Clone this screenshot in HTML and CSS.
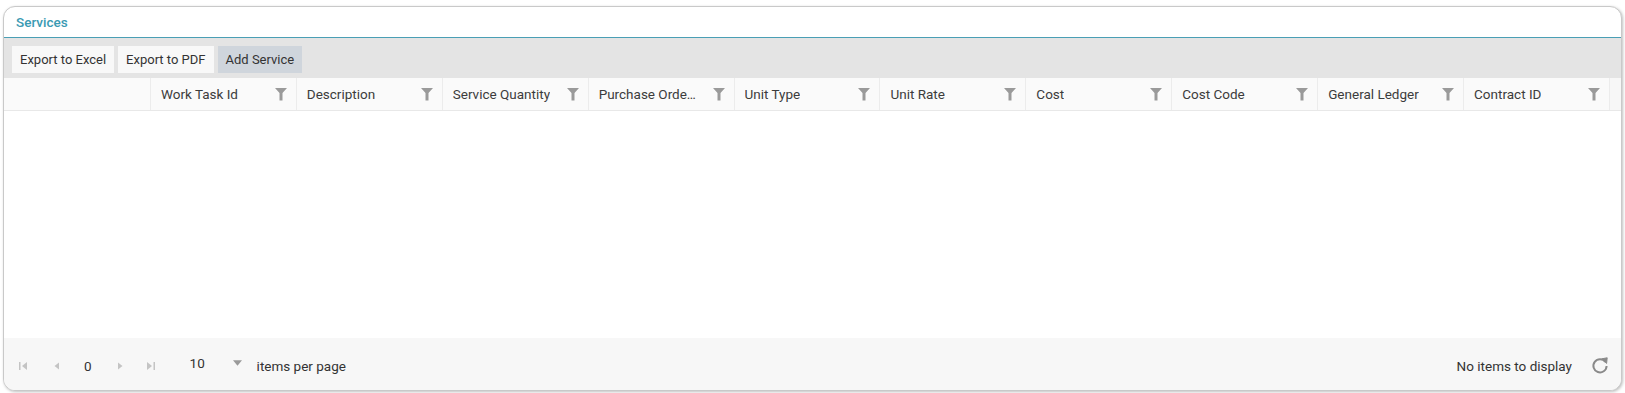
FILE: index.html
```html
<!DOCTYPE html>
<html>

<head>
    <title>Services</title>
    <meta charset="UTF-8">
    <link rel="stylesheet" href="styles.css">
</head>

<body>
    <div class="panel">
        <div class="panel-title">Services</div>

        <div class="toolbar">
            <span class="btn">Export to Excel</span>
            <span class="btn">Export to PDF</span>
            <span class="btn btn-primary">Add Service</span>
        </div>

        <div class="grid-header">
            <div class="th"></div>
            <div class="th"><span>Work Task Id</span><svg class="filter" viewBox="0 0 12 14"><polygon points="0,1 12,1 7.5,6 7.5,13.5 4.5,13.5 4.5,6" /></svg></div>
            <div class="th"><span>Description</span><svg class="filter" viewBox="0 0 12 14"><polygon points="0,1 12,1 7.5,6 7.5,13.5 4.5,13.5 4.5,6" /></svg></div>
            <div class="th"><span>Service Quantity</span><svg class="filter" viewBox="0 0 12 14"><polygon points="0,1 12,1 7.5,6 7.5,13.5 4.5,13.5 4.5,6" /></svg></div>
            <div class="th"><span>Purchase Orde…</span><svg class="filter" viewBox="0 0 12 14"><polygon points="0,1 12,1 7.5,6 7.5,13.5 4.5,13.5 4.5,6" /></svg></div>
            <div class="th"><span>Unit Type</span><svg class="filter" viewBox="0 0 12 14"><polygon points="0,1 12,1 7.5,6 7.5,13.5 4.5,13.5 4.5,6" /></svg></div>
            <div class="th"><span>Unit Rate</span><svg class="filter" viewBox="0 0 12 14"><polygon points="0,1 12,1 7.5,6 7.5,13.5 4.5,13.5 4.5,6" /></svg></div>
            <div class="th"><span>Cost</span><svg class="filter" viewBox="0 0 12 14"><polygon points="0,1 12,1 7.5,6 7.5,13.5 4.5,13.5 4.5,6" /></svg></div>
            <div class="th"><span>Cost Code</span><svg class="filter" viewBox="0 0 12 14"><polygon points="0,1 12,1 7.5,6 7.5,13.5 4.5,13.5 4.5,6" /></svg></div>
            <div class="th"><span>General Ledger</span><svg class="filter" viewBox="0 0 12 14"><polygon points="0,1 12,1 7.5,6 7.5,13.5 4.5,13.5 4.5,6" /></svg></div>
            <div class="th"><span>Contract ID</span><svg class="filter" viewBox="0 0 12 14"><polygon points="0,1 12,1 7.5,6 7.5,13.5 4.5,13.5 4.5,6" /></svg></div>
            <div class="th gutter"></div>
        </div>

        <div class="grid-body"></div>

        <div class="pager">
            <div class="pager-nav">
                <svg class="nav-icon" viewBox="0 0 10 10"><rect x="1" y="1" width="1.5" height="8" /><polygon points="9,1 9,9 4,5" /></svg>
                <svg class="nav-icon" viewBox="0 0 10 10"><polygon points="7,1.5 7,8.5 2.5,5" /></svg>
                <span class="page-num">0</span>
                <svg class="nav-icon" viewBox="0 0 10 10"><polygon points="3,1.5 3,8.5 7.5,5" /></svg>
                <svg class="nav-icon" viewBox="0 0 10 10"><polygon points="1,1 1,9 6,5" /><rect x="7.5" y="1" width="1.5" height="8" /></svg>
            </div>
            <div class="page-size">
                <span class="size-val">10</span>
                <svg class="caret" viewBox="0 0 10 6"><polygon points="0,0 10,0 5,6" /></svg>
            </div>
            <span class="per-page">items per page</span>
            <span class="pager-info">No items to display</span>
            <svg class="refresh" viewBox="0 0 18 18"><path d="M14.4 5 A6.6 6.6 0 1 0 15.6 9" fill="none" stroke-width="2" /><polygon points="10.8,1.8 16.2,0.8 15.6,6.4" /></svg>
        </div>
    </div>
</body></html>
```

FILE: styles.css
```css
* {
    box-sizing: border-box;
}

body {
    margin: 0;
    background: #ffffff;
    font-family: Roboto, 'Liberation Sans', sans-serif;
    font-size: 13.5px;
    color: #333333;
}

.panel {
    margin: 6px 3px 2px 3px;
    height: 385px;
    border: 1px solid #c9c9c9;
    border-radius: 12px;
    box-shadow: 1px 1px 3px rgba(0, 0, 0, 0.25);
    display: flex;
    flex-direction: column;
    overflow: hidden;
    background: #ffffff;
}

.panel-title {
    height: 31px;
    padding: 0 12px;
    line-height: 31px;
    font-weight: 500;
    color: #3a9ab3;
    border-bottom: 1px solid #4a9fb5;
}

.toolbar {
    height: 40px;
    background: #e4e4e4;
    padding: 8px 8px 0 8px;
    display: flex;
    gap: 4px;
    align-items: flex-start;
}

.btn {
    height: 27px;
    line-height: 27px;
    padding: 0 8px;
    background: #f8f8f8;
    color: #333333;
    font-size: 13px;
}

.btn-primary {
    background: #cfd5dc;
}

.grid-header {
    height: 33px;
    display: grid;
    grid-template-columns: repeat(11, 1fr) 12px;
    background: #fafafa;
    border-bottom: 1px solid #e8e8e8;
}

.th {
    display: flex;
    align-items: center;
    justify-content: space-between;
    padding: 0 9px 0 10px;
    border-left: 1px solid #ececec;
    min-width: 0;
    color: #3c3c3c;
}

.th:first-child {
    border-left: none;
}

.th span {
    white-space: nowrap;
    overflow: hidden;
    margin-right: 6px;
}

.filter {
    flex: none;
    width: 12px;
    height: 14px;
    fill: #9a9a9a;
}

.gutter {
    padding: 0;
    background: #f7f7f7;
}

.grid-body {
    flex: 1;
    background: #ffffff;
}

.pager {
    height: 52px;
    background: #f7f7f7;
    display: flex;
    align-items: center;
    padding: 4px 12px 0 14px;
}

.pager-nav {
    display: flex;
    align-items: center;
}

.nav-icon {
    width: 10px;
    height: 10px;
    fill: #c4c4c4;
    margin-right: 21px;
}

.nav-icon:first-child {
    margin-right: 24px;
}

.page-num {
    margin-right: 23px;
    margin-left: 1px;
}

.page-size {
    display: flex;
    align-items: center;
    margin-left: 13px;
    margin-top: -6px;
}

.size-val {
    width: 43px;
}

.caret {
    width: 9px;
    height: 6px;
    fill: #9a9a9a;
}

.per-page {
    margin-left: 15px;
}

.pager-info {
    margin-left: auto;
    margin-right: 19px;
}

.refresh {
    width: 18px;
    height: 18px;
    stroke: #8a8a8a;
    fill: #8a8a8a;
}
```
